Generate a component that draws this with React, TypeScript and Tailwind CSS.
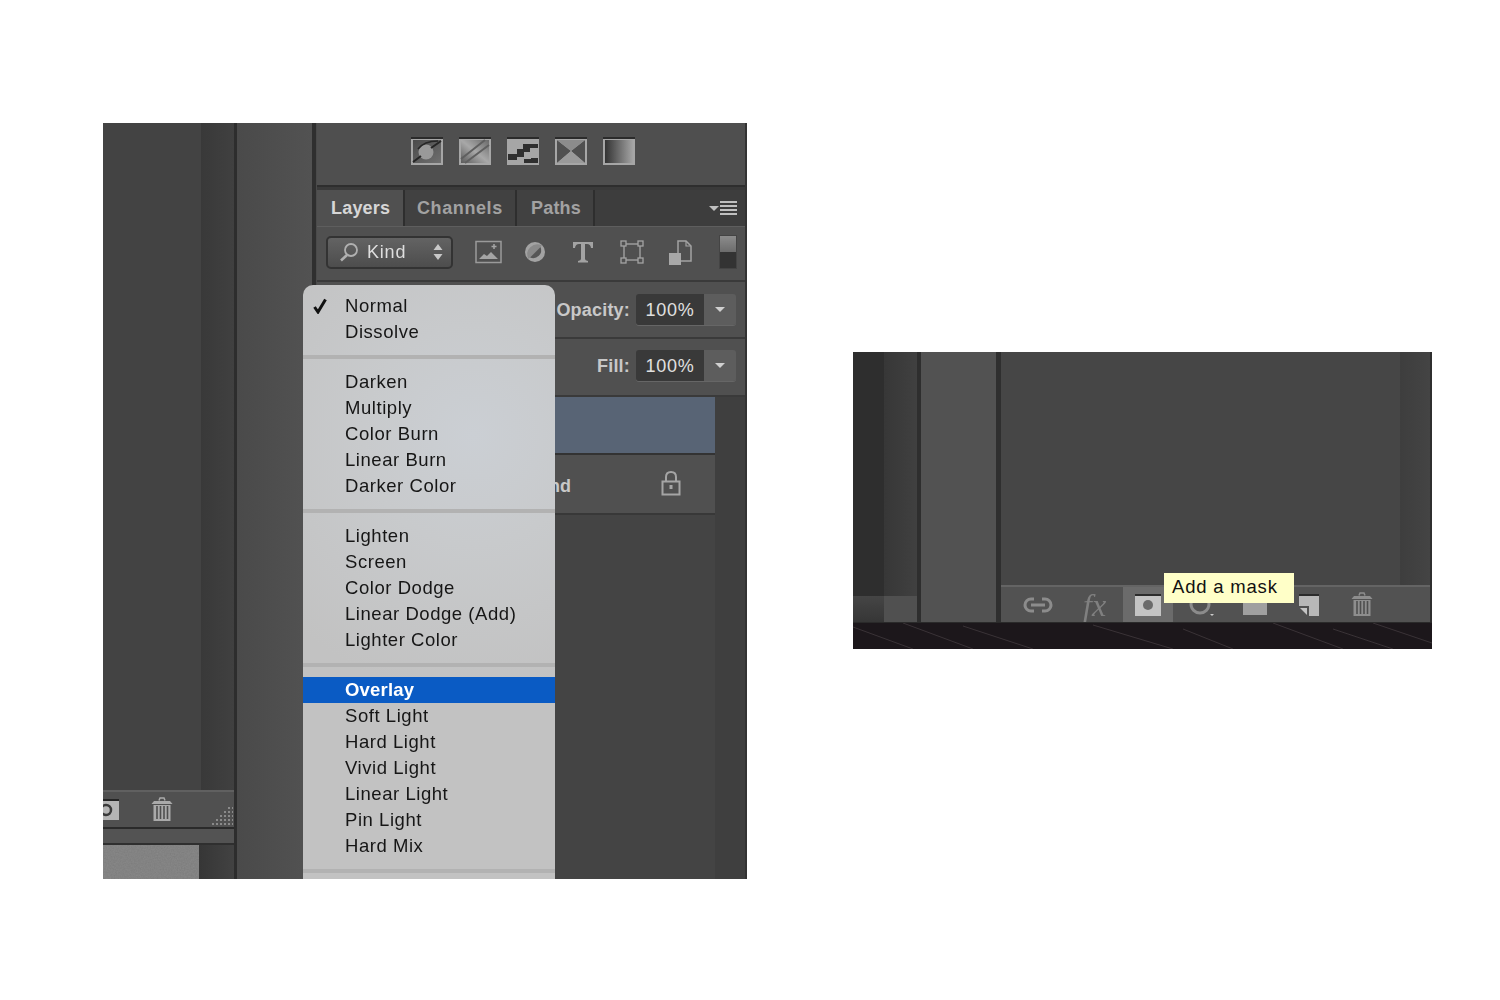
const font = "font-['Liberation_Sans',Arial,sans-serif]";

const menuGroups = [
  ['Normal', 'Dissolve'],
  ['Darken', 'Multiply', 'Color Burn', 'Linear Burn', 'Darker Color'],
  ['Lighten', 'Screen', 'Color Dodge', 'Linear Dodge (Add)', 'Lighter Color'],
  ['Overlay', 'Soft Light', 'Hard Light', 'Vivid Light', 'Linear Light', 'Pin Light', 'Hard Mix'],
];

function Trash({ color = '#aaaaaa' }: { color?: string }) {
  return (
    <svg width="24" height="25" viewBox="0 0 24 25" fill="none">
      <path d="M9 3.5 L10 1 H14 L15 3.5" stroke={color} strokeWidth="1.5" />
      <path d="M1.5 7 L4 4 H20 L22.5 7 Z" fill={color} />
      <path d="M3.5 8 H20.5 V24 H3.5 Z" fill={color} />
      <path d="M7 9 V22 M10.5 9 V22 M14 9 V22 M17.5 9 V22" stroke="#4f4f4f" strokeWidth="1.6" />
    </svg>
  );
}

function AdjustIcon({ kind }: { kind: number }) {
  return (
    <svg width="32" height="28" viewBox="0 0 32 28">
      <defs>
        <linearGradient id={`adj${kind}`} x1="0" y1="1" x2="1" y2="0">
          <stop offset="0" stopColor="#5a5a5a" />
          <stop offset="0.5" stopColor="#a8a8a8" />
          <stop offset="1" stopColor="#6a6a6a" />
        </linearGradient>
        <linearGradient id="gradmap" x1="0" y1="0" x2="1" y2="0">
          <stop offset="0" stopColor="#333333" />
          <stop offset="1" stopColor="#a5a5a5" />
        </linearGradient>
        <linearGradient id="curvesbg" x1="0" y1="0" x2="1" y2="1">
          <stop offset="0" stopColor="#4a4a4a" />
          <stop offset="1" stopColor="#707070" />
        </linearGradient>
      </defs>
      <rect x="0" y="0" width="32" height="28" fill="#a6a6a6" />
      <rect x="0" y="0" width="32" height="2" fill="#2b2b2b" />
      {kind === 0 && (
        <>
          <rect x="2" y="3" width="28" height="23" fill="url(#curvesbg)" />
          <circle cx="15" cy="15" r="7.5" fill="#999999" />
          <path d="M2 25 L10 19 M20 11 L30 4" stroke="#262626" strokeWidth="2" />
          <path d="M7 12 Q13 4 27 4" stroke="#262626" strokeWidth="1.5" fill="none" />
        </>
      )}
      {kind === 1 && (
        <>
          <rect x="2" y="3" width="28" height="23" fill={`url(#adj${kind})`} />
          <path d="M2 22 L26 3 M6 26 L30 8" stroke="#5f5f5f" strokeWidth="2" />
        </>
      )}
      {kind === 2 && <path d="M1 17 H10 V12 H16 V7 H31 V11 H23 V15 H17 V20 H10 V23 H1 Z M17 22 H24 V21 H31 V26 H17 Z" fill="#2f2f2f" />}
      {kind === 3 && (
        <>
          <path d="M2 3 L16 14 L2 26 Z" fill="#505050" />
          <path d="M30 3 L16 14 L30 26 Z" fill="#505050" />
          <path d="M2 3 H30 L16 14 Z" fill="#8c8c8c" />
          <path d="M2 26 H30 L16 14 Z" fill="#9a9a9a" />
        </>
      )}
      {kind === 4 && <rect x="2" y="3" width="28" height="23" fill="url(#gradmap)" />}
    </svg>
  );
}

function FilterIcons() {
  return (
    <div className="flex items-center ml-[22px]">
      <svg width="27" height="24" viewBox="0 0 27 24" fill="none">
        <rect x="1" y="1.5" width="25" height="21" stroke="#9a9a9a" strokeWidth="1.5" />
        <path d="M4 19 L9 14 L12 16 L16 12 L23 19 Z" fill="#a5a5a5" />
        <path d="M19 4 V9 M16.5 6.5 H21.5" stroke="#a5a5a5" strokeWidth="1.5" />
      </svg>
      <svg width="22" height="22" viewBox="0 0 22 22" className="ml-[22px]">
        <circle cx="11" cy="11" r="10" fill="#a3a3a3" />
        <path d="M4.5 18 L18 4.5 A10 10 0 0 0 4.5 18 Z" fill="#8a8a8a" />
        <path d="M6 16.5 L16.5 6 A 8 8 0 0 1 6 16.5 Z" fill="#565656" />
      </svg>
      <svg width="24" height="22" viewBox="0 0 24 22" className="ml-[25px]">
        <path d="M2 1 H22 V7 H20 Q19.5 3 16 3 H14 V18 Q14 19.6 17 20 V21.5 H7 V20 Q10 19.6 10 18 V3 H8 Q4.5 3 4 7 H2 Z" fill="#a3a3a3" />
      </svg>
      <svg width="24" height="24" viewBox="0 0 24 24" fill="none" className="ml-[25px]">
        <rect x="4" y="4" width="16" height="16" stroke="#9a9a9a" strokeWidth="1.5" />
        <rect x="1" y="1" width="5" height="5" fill="#505050" stroke="#a3a3a3" strokeWidth="1.3" />
        <rect x="18" y="1" width="5" height="5" fill="#505050" stroke="#a3a3a3" strokeWidth="1.3" />
        <rect x="1" y="18" width="5" height="5" fill="#505050" stroke="#a3a3a3" strokeWidth="1.3" />
        <rect x="18" y="18" width="5" height="5" fill="#505050" stroke="#a3a3a3" strokeWidth="1.3" />
      </svg>
      <svg width="24" height="25" viewBox="0 0 24 25" fill="none" className="ml-[24px]">
        <path d="M10 14 V1 H18 L23 6 V21 H13" stroke="#a3a3a3" strokeWidth="1.5" />
        <path d="M18 1 V6 H23" stroke="#a3a3a3" strokeWidth="1.2" />
        <rect x="1" y="13" width="12" height="12" fill="#a8a8a8" />
      </svg>
    </div>
  );
}

function ValueRow({ label, className }: { label: string; className: string }) {
  return (
    <div className={`flex items-center justify-end pr-[9px] bg-[#505050] ${className}`}>
      <span className="text-[18px] font-bold text-[#c8c8c8] mr-[6px] pt-[2px] tracking-[0.2px]">{label}</span>
      <div className="flex h-[31px] w-[100px] rounded-[3px] overflow-hidden shadow-[0_1px_0_#666666]">
        <div className="w-[68px] bg-[#393939] flex items-center justify-center pt-[2px] text-[18px] text-[#e0e0e0] tracking-[0.8px]">100%</div>
        <div className="flex-1 bg-[#5d5d5d] flex items-center justify-center">
          <div className="w-0 h-0 border-x-[5px] border-x-transparent border-t-[5px] border-t-[#d0d0d0]" />
        </div>
      </div>
    </div>
  );
}

function BlendMenu() {
  return (
    <div className="absolute left-[200px] top-[162px] w-[252px] h-[594px] overflow-hidden rounded-t-[10px] pt-[8px] bg-[radial-gradient(circle_at_170px_150px,#cbcfd4_0,#c8cacc_110px,#c2c2c2_260px)] text-[18.5px] text-[#161616] tracking-[0.55px]">
      {menuGroups.map((group, i) => (
        <div key={i}>
          {group.map((name) => (
            <div
              key={name}
              className={`relative h-[26px] leading-[26px] pl-[42px] ${name === 'Overlay' ? 'bg-[#0a5bc4] text-white font-bold tracking-[0.2px]' : ''}`}
            >
              {name === 'Normal' && (
                <svg width="14" height="16" viewBox="0 0 14 16" className="absolute left-[10px] top-[5px]">
                  <path d="M1.5 9 L5 14 L12.5 1.5" fill="none" stroke="#111111" strokeWidth="3" />
                </svg>
              )}
              {name}
            </div>
          ))}
          <div className="h-[24px] flex items-center">
            <div className="w-full h-[4px] bg-[#b2b2b2]" />
          </div>
        </div>
      ))}
    </div>
  );
}

function LeftShot() {
  return (
    <div className="relative flex w-[644px] h-[756px] overflow-hidden shrink-0 blur-[0.4px]">
      <div className="w-[131px] flex flex-col">
        <div className="flex h-[667px]">
          <div className="w-[98px] bg-[#434343]" />
          <div className="flex-1 bg-gradient-to-r from-[#393939] to-[#404040]" />
        </div>
        <div className="h-[37px] relative bg-[#505050] border-t-[2px] border-[#606060] flex items-center">
          <svg width="16" height="24" viewBox="0 0 16 24" className="mt-[1px]">
            <rect x="0" y="2" width="16" height="20" fill="#b5b5b5" />
            <rect x="0" y="1" width="16" height="2" fill="#252525" />
            <circle cx="3" cy="12" r="5" fill="none" stroke="#3a3a3a" strokeWidth="2.5" />
          </svg>
          <div className="ml-[31px]">
            <Trash />
          </div>
          <svg width="22" height="20" viewBox="0 0 22 20" className="absolute right-[1px] top-[13px]">
            {[0, 1, 2, 3, 4].map((r) =>
              [0, 1, 2, 3, 4, 5].filter((c) => c >= 4 - r).map((c) => (
                <rect key={`${r}-${c}`} x={1 + c * 4} y={2 + r * 4} width="2" height="2" fill="#8a8a8a" />
              )),
            )}
          </svg>
        </div>
        <div className="h-[2px] bg-[#2a2a2a]" />
        <div className="h-[14px] bg-[#535353]" />
        <div className="h-[2px] bg-[#2f2f2f]" />
        <div className="flex-1 flex">
          <svg width="96" height="34">
            <filter id="grain">
              <feTurbulence type="fractalNoise" baseFrequency="0.7" numOctaves="2" />
              <feColorMatrix values="0 0 0 0 0.42 0 0 0 0 0.42 0 0 0 0 0.42 0.6 0 0 0 0" />
            </filter>
            <rect width="96" height="34" fill="#7b7b7b" />
            <rect width="96" height="34" filter="url(#grain)" opacity="0.5" />
          </svg>
          <div className="flex-1 bg-gradient-to-r from-[#363636] to-[#424242]" />
        </div>
      </div>
      <div className="w-[3px] bg-[#2d2d2d]" />
      <div className="w-[75px] bg-gradient-to-r from-[#4a4a4a] to-[#525252]" />
      <div className="w-[5px] bg-[#2f2f2f] border-r-[1px] border-[#4a4a4a]" />

      <div className="flex-1 flex flex-col border-r-[2px] border-[#333333]">
        <div className="h-[62px] bg-[#4f4f4f] flex items-start gap-[16px] pl-[94px] pt-[14px]">
          {[0, 1, 2, 3, 4].map((k) => (
            <AdjustIcon key={k} kind={k} />
          ))}
        </div>
        <div className="h-[5px] bg-[#3a3a3a] border-t-[2px] border-[#2e2e2e]" />
        <div className="h-[36px] flex bg-[#3d3d3d] text-[18px] font-bold tracking-[0.2px]">
          <div className="w-[86px] bg-[#505050] flex items-center pl-[14px] pt-[1px] text-[#d6d6d6]">Layers</div>
          <div className="w-[112px] border-l-[2px] border-[#2e2e2e] bg-[#414141] flex items-center pl-[12px] pt-[1px] tracking-[0.6px] text-[#a2a2a2]">Channels</div>
          <div className="w-[80px] border-x-[2px] border-[#2e2e2e] bg-[#414141] flex items-center pl-[14px] pt-[1px] text-[#a2a2a2]">Paths</div>
          <div className="flex-1 flex items-center justify-end pr-[8px] gap-[1px]">
            <div className="w-0 h-0 border-x-[5px] border-x-transparent border-t-[5px] border-t-[#c0c0c0]" />
            <div className="w-[17px] h-[14px] flex flex-col justify-between">
              <div className="h-[2px] bg-[#c0c0c0]" />
              <div className="h-[2px] bg-[#c0c0c0]" />
              <div className="h-[2px] bg-[#c0c0c0]" />
              <div className="h-[2px] bg-[#c0c0c0]" />
            </div>
          </div>
        </div>
        <div className="h-[54px] bg-[#505050] border-t-[1px] border-[#5e5e5e] flex items-center pl-[9px] pb-[3px]">
          <div className="w-[127px] h-[33px] rounded-[5px] border-[2px] border-[#333333] bg-gradient-to-b from-[#636363] to-[#4d4d4d] flex items-center pl-[11px] pr-[8px] text-[18px] text-[#dedede]">
            <svg width="20" height="20" viewBox="0 0 20 20" fill="none">
              <circle cx="12" cy="8" r="6" stroke="#b0b0b0" strokeWidth="1.8" />
              <path d="M8 13 L2 18.5" stroke="#b0b0b0" strokeWidth="2.6" />
            </svg>
            <span className="ml-[8px] font-medium tracking-[0.8px]">Kind</span>
            <svg width="10" height="18" viewBox="0 0 10 18" className="ml-auto">
              <path d="M5 1 L9.5 7 H0.5 Z M5 17 L9.5 11 H0.5 Z" fill="#c8c8c8" />
            </svg>
          </div>
          <FilterIcons />
          <div className="ml-[27px] w-[18px] h-[34px] flex flex-col border border-[#444444]">
            <div className="flex-1 bg-gradient-to-b from-[#8c8c8c] to-[#6c6c6c]" />
            <div className="flex-1 bg-[#333333]" />
          </div>
        </div>
        <div className="h-[2px] bg-[#3a3a3a]" />
        <ValueRow label="Opacity:" className="h-[55px]" />
        <div className="h-[2px] bg-[#3a3a3a]" />
        <ValueRow label="Fill:" className="h-[56px] pb-[3px]" />
        <div className="h-[2px] bg-[#3a3a3a]" />
        <div className="flex-1 flex">
          <div className="w-[398px] flex flex-col bg-[#444444]">
            <div className="h-[56px] bg-[#586475]" />
            <div className="h-[2px] bg-[#333333]" />
            <div className="h-[58px] bg-[#505050] flex items-center justify-between pl-[232px] pr-[34px]">
              <span className="text-[18px] font-bold text-[#c8c8c8] pt-[4px]">nd</span>
              <svg width="20" height="26" viewBox="0 0 20 26" fill="none" className="mb-[3px]">
                <path d="M5 12 V7 Q5 2 10 2 Q15 2 15 7 V12" stroke="#a5a5a5" strokeWidth="2" />
                <rect x="1.5" y="11.5" width="17" height="13" stroke="#a5a5a5" strokeWidth="2" />
                <rect x="8.5" y="15" width="3" height="4" fill="#a5a5a5" />
              </svg>
            </div>
            <div className="h-[2px] bg-[#383838]" />
          </div>
          <div className="flex-1 bg-[#3f3f3f]" />
        </div>
      </div>

      <BlendMenu />
    </div>
  );
}

function RightShot() {
  return (
    <div className="relative flex flex-col w-[579px] h-[297px] overflow-hidden shrink-0 blur-[0.4px]">
      <div className="h-[270px] flex">
        <div className="w-[31px] flex flex-col">
          <div className="flex-1 bg-[#2e2e2e]" />
          <div className="h-[26px] bg-gradient-to-b from-[#454545] to-[#363636]" />
        </div>
        <div className="w-[33px] flex flex-col">
          <div className="flex-1 bg-gradient-to-r from-[#373737] to-[#404040]" />
          <div className="h-[26px] bg-[#505050]" />
        </div>
        <div className="w-[4px] bg-[#2e2e2e]" />
        <div className="w-[75px] bg-[#525252]" />
        <div className="w-[5px] bg-[#2f2f2f]" />
        <div className="flex-1 flex flex-col">
          <div className="flex-1 flex">
            <div className="flex-1 bg-[#464646]" />
            <div className="w-[30px] bg-gradient-to-r from-[#3e3e3e] to-[#444444]" />
          </div>
          <div className="h-[37px] bg-[#525252] border-t-[2px] border-[#646464] flex items-center">
            <svg width="30" height="16" viewBox="0 0 30 16" fill="none" className="ml-[22px]">
              <path d="M11 2 H8 A6 6 0 0 0 8 14 H11 M19 2 H22 A6 6 0 0 1 22 14 H19" stroke="#8c8c8c" strokeWidth="3" />
              <path d="M8 8 H22" stroke="#8c8c8c" strokeWidth="3" />
            </svg>
            <span className="ml-[30px] w-[40px] text-[32px] leading-none italic text-[#808080] font-['Liberation_Serif',serif]">fx</span>
            <div className="w-[50px] h-[35px] bg-[#6b6b6b] flex items-center pl-[12px]">
              <svg width="26" height="22" viewBox="0 0 26 22">
                <rect width="26" height="22" fill="#c4c4c4" />
                <rect width="26" height="2" fill="#2c2c2c" />
                <circle cx="13" cy="11" r="5" fill="#6a6a6a" />
              </svg>
            </div>
            <svg width="28" height="24" viewBox="0 0 28 24" fill="none" className="ml-[14px]">
              <circle cx="13" cy="11" r="9" stroke="#8c8c8c" strokeWidth="3" />
              <path d="M23 21 L25 23 L27 21 Z" fill="#cccccc" />
            </svg>
            <div className="w-[24px] h-[20px] ml-[28px] bg-[#a0a0a0]" />
            <svg width="22" height="22" viewBox="0 0 22 22" className="ml-[32px]">
              <path d="M0 2 H20 V22 H10 V12 H0 Z" fill="#b8b8b8" />
              <path d="M0 0 H20 V2 H0 Z" fill="#2c2c2c" />
              <path d="M1 14 H8 V21 Z" fill="#c4c4c4" />
            </svg>
            <div className="ml-[29px]">
              <Trash color="#8e8e8e" />
            </div>
          </div>
        </div>
        <div className="w-[2px] bg-[#2f2f2f]" />
      </div>
      <div className="flex-1 border-t-[1px] border-[#2a2a2a] bg-[#1c171b]">
        <svg width="579" height="26" viewBox="0 0 579 26" stroke="#3a3337" strokeWidth="1">
          <path d="M0 4 L60 26 M50 0 L120 26 M110 3 L180 26 M240 2 L320 26 M330 6 L380 26 M420 0 L490 26 M480 6 L540 26 M520 0 L579 20" />
        </svg>
      </div>
      <div className="absolute left-[311px] top-[221px] w-[130px] h-[30px] bg-[#ffffc8] flex items-center pl-[8px] pb-[2px] text-[18.5px] text-[#111111] tracking-[0.8px]">
        Add a mask
      </div>
    </div>
  );
}

export default function App() {
  return (
    <div className={`w-[1500px] h-[1000px] bg-white flex items-start pl-[103px] pt-[123px] ${font}`}>
      <LeftShot />
      <div className="ml-[106px] mt-[229px]">
        <RightShot />
      </div>
    </div>
  );
}
